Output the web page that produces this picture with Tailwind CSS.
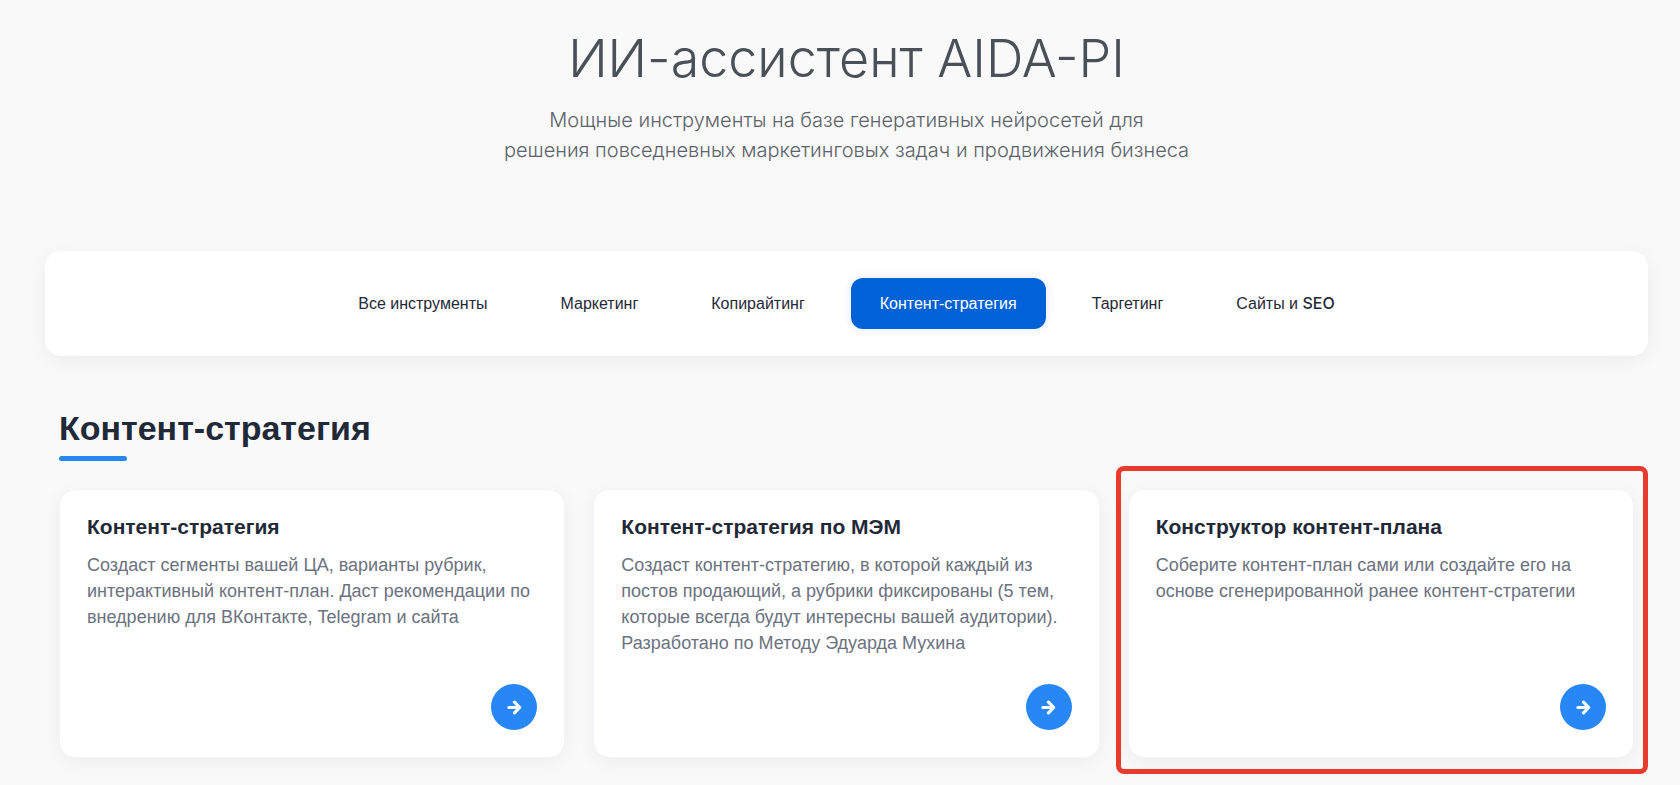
<!DOCTYPE html>
<html lang="ru">
<head>
  <meta charset="UTF-8" />
  <meta name="viewport" content="width=device-width, initial-scale=1.0" />
  <title>ИИ-ассистент AIDA-PI</title>
  <script src="https://cdn.jsdelivr.net/npm/@tailwindcss/browser@4"></script>
</head>
<body class="bg-[#f9f9f9] min-h-screen overflow-x-hidden pl-[45px] pr-8 pt-[25px] font-['Liberation_Sans',Arial,sans-serif] text-[#1f2937]">
  <header class="text-center">
    <h1 class="font-['Inter',sans-serif] font-light text-[52px] leading-[68px] text-[#495057]">ИИ-ассистент AIDA-PI</h1>
    <p class="mt-3 font-['Inter',sans-serif] font-light text-[20px] leading-[30px] text-[#5c636a]">
      Мощные инструменты на базе генеративных нейросетей для<br />
      решения повседневных маркетинговых задач и продвижения бизнеса
    </p>
  </header>

  <nav class="mt-[86px] rounded-2xl bg-white p-[27px] shadow-[0_4px_20px_rgba(0,0,0,0.06)]">
    <div class="flex flex-wrap justify-center gap-[19px] text-[16px] leading-[51px]">
      <button type="button" class="rounded-xl px-[27px]">Все инструменты</button>
      <button type="button" class="rounded-xl px-[27px]">Маркетинг</button>
      <button type="button" class="rounded-xl px-[27px]">Копирайтинг</button>
      <button type="button" class="rounded-xl px-[29px] bg-[#0062d6] text-white shadow-[0_0_10px_rgba(80,80,255,0.15)]">Контент-стратегия</button>
      <button type="button" class="rounded-xl px-[27px]">Таргетинг</button>
      <button type="button" class="rounded-xl px-[27px]">Сайты и <span class="font-['Inter',sans-serif] font-medium">SEO</span></button>
    </div>
  </nav>

  <main class="mt-[51px] px-[14px]">
    <h2 class="text-[34px] leading-[42px] font-bold">Контент-стратегия</h2>
    <div class="mt-[7px] h-[5px] w-[68px] rounded-full bg-[#2787f5]"></div>

    <div class="mt-7 grid grid-cols-3 gap-7">
      <article class="flex min-h-[269px] flex-col rounded-2xl border border-[#f3f3fb] bg-white p-[27px] pt-[25px] shadow-[0_4px_20px_rgba(0,0,0,0.05)]">
        <h3 class="text-[21px] leading-6 font-bold">Контент-стратегия</h3>
        <p class="mt-[13px] text-[18px] leading-[26px] text-[#6b7280]">Создаст сегменты вашей ЦА, варианты рубрик, интерактивный контент-план. Даст рекомендации по внедрению для ВКонтакте, Telegram и сайта</p>
        <a href="#" aria-label="Контент-стратегия" class="mt-auto flex size-[46px] items-center justify-center self-end rounded-full bg-[#2787f5] text-white">
          <svg class="size-[15px]" viewBox="0 0 14 14" fill="none" stroke="currentColor" stroke-width="3" stroke-linecap="round" stroke-linejoin="round"><path d="M1.8 7h9.7M7 2l4.8 5L7 12" /></svg>
        </a>
      </article>

      <article class="flex min-h-[269px] flex-col rounded-2xl border border-[#f3f3fb] bg-white p-[27px] pt-[25px] shadow-[0_4px_20px_rgba(0,0,0,0.05)]">
        <h3 class="text-[21px] leading-6 font-bold">Контент-стратегия по МЭМ</h3>
        <p class="mt-[13px] text-[18px] leading-[26px] text-[#6b7280]">Создаст контент-стратегию, в которой каждый из постов продающий, а рубрики фиксированы (5 тем, которые всегда будут интересны вашей аудитории). Разработано по Методу Эдуарда Мухина</p>
        <a href="#" aria-label="Контент-стратегия по МЭМ" class="mt-auto flex size-[46px] items-center justify-center self-end rounded-full bg-[#2787f5] text-white">
          <svg class="size-[15px]" viewBox="0 0 14 14" fill="none" stroke="currentColor" stroke-width="3" stroke-linecap="round" stroke-linejoin="round"><path d="M1.8 7h9.7M7 2l4.8 5L7 12" /></svg>
        </a>
      </article>

      <article class="relative flex min-h-[269px] flex-col rounded-2xl border border-[#f3f3fb] bg-white p-[27px] pt-[25px] shadow-[0_4px_20px_rgba(0,0,0,0.05)]">
        <h3 class="text-[21px] leading-6 font-bold">Конструктор контент-плана</h3>
        <p class="mt-[13px] text-[18px] leading-[26px] text-[#6b7280]">Соберите контент-план сами или создайте его на основе сгенерированной ранее контент-стратегии</p>
        <a href="#" aria-label="Конструктор контент-плана" class="mt-auto flex size-[46px] items-center justify-center self-end rounded-full bg-[#2787f5] text-white">
          <svg class="size-[15px]" viewBox="0 0 14 14" fill="none" stroke="currentColor" stroke-width="3" stroke-linecap="round" stroke-linejoin="round"><path d="M1.8 7h9.7M7 2l4.8 5L7 12" /></svg>
        </a>
        <!-- highlight frame around the card -->
        <div class="pointer-events-none absolute -top-6 -right-[15px] -bottom-[17px] -left-[13px] rounded-lg border-5 border-[#e63b2e]"></div>
      </article>
    </div>
  </main>
</body>
</html>
